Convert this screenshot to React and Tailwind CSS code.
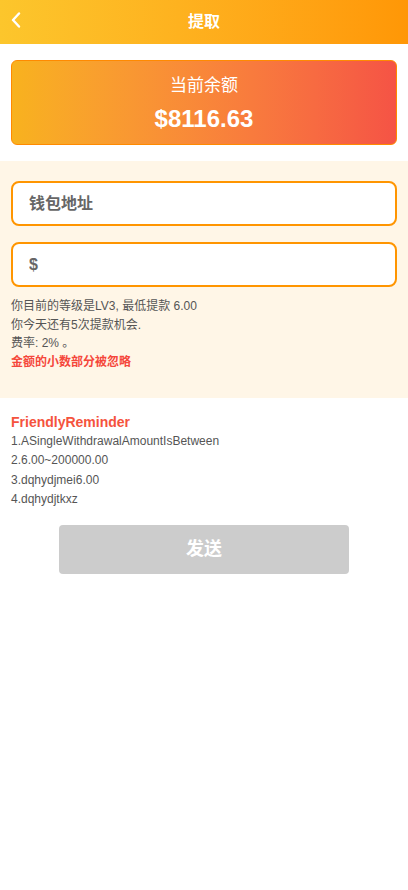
import { useState } from 'react'

const font = { fontFamily: '"Liberation Sans", Arial, "Noto Sans CJK SC", sans-serif' }

export default function App() {
  const [address, setAddress] = useState('')
  const [amount, setAmount] = useState('')

  return (
    <div className="min-h-[890px] bg-white" style={font}>
      <header className="relative h-[44px] flex items-center justify-center bg-gradient-to-r from-[#fcc62c] to-[#ff9706]">
        <button className="absolute left-[8px] top-[11px] w-[16px] h-[18px] flex items-center justify-center">
          <svg width="12" height="16" viewBox="0 0 12 16" fill="none">
            <path d="M9 1.5 L3 8 L9 14.5" stroke="white" strokeWidth="2.4" strokeLinecap="round" strokeLinejoin="round" />
          </svg>
        </button>
        <h1 className="text-white font-bold text-[16px] leading-none">提取</h1>
      </header>

      <div className="px-[11px] pt-[16px] pb-[16px]">
        <div className="h-[85px] rounded-[6px] border border-[#ff8a00] bg-gradient-to-r from-[#f8b21e] to-[#f55345] flex flex-col items-center justify-center text-white">
          <div className="text-[17px] leading-none mt-[2px]">当前余额</div>
          <div className="text-[24px] font-bold leading-none mt-[13px]">$8116.63</div>
        </div>
      </div>

      <div className="bg-[#fff6e7] px-[11px] pt-[20px] pb-[27px]">
        <input
          className="w-full h-[45px] rounded-[8px] border-2 border-[#ff9500] bg-white px-[16px] text-[16px] font-bold text-[#555] placeholder:text-[#666] outline-none"
          placeholder="钱包地址"
          value={address}
          onChange={(e) => setAddress(e.target.value)}
        />
        <input
          className="w-full h-[45px] mt-[16px] rounded-[8px] border-2 border-[#ff9500] bg-white px-[16px] text-[16px] font-bold text-[#555] placeholder:text-[#666] outline-none"
          placeholder="$"
          value={amount}
          onChange={(e) => setAmount(e.target.value)}
        />
        <div className="mt-[10px] text-[12px] leading-[18.5px] text-[#555]">
          <p>你目前的等级是LV3, 最低提款 6.00</p>
          <p>你今天还有5次提款机会.</p>
          <p>费率: 2% 。</p>
          <p className="text-[#f5473b] font-bold">金额的小数部分被忽略</p>
        </div>
      </div>

      <div className="px-[11px] pt-[15px]">
        <h2 className="text-[14px] font-bold text-[#f5533d] leading-[18px]">FriendlyReminder</h2>
        <div className="mt-[1px] text-[12px] leading-[19.3px] text-[#555]">
          <p>1.ASingleWithdrawalAmountIsBetween</p>
          <p>2.6.00~200000.00</p>
          <p>3.dqhydjmei6.00</p>
          <p>4.dqhydjtkxz</p>
        </div>
      </div>

      <div className="flex justify-center mt-[16px]">
        <button className="w-[290px] h-[49px] rounded-[4px] bg-[#cccccc] text-white text-[18px] font-bold">发送</button>
      </div>
    </div>
  )
}
